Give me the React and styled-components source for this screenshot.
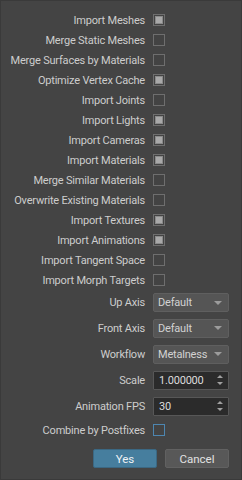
import React from "react"
import styled, { createGlobalStyle } from "styled-components"

const GlobalStyle = createGlobalStyle`
  html, body {
    margin: 0;
    padding: 0;
    background: #444444;
  }
`

const color_bg = "#444444"
const color_text = "#cdcdcd"

const Dialog = styled.div`
  box-sizing: border-box;
  width: 242px;
  height: 480px;
  background: ${color_bg};
  border: 1px solid #3a3a3a;
  padding: 9px 12px 0 0;
  font-family: Roboto, "Liberation Sans", Arial, sans-serif;
  font-size: 11px;
  letter-spacing: -0.2px;
  color: ${color_text};
`

const Form = styled.div`
  display: grid;
  grid-template-columns: minmax(0, 1fr) 76px;
  column-gap: 8px;
`

const Label = styled.div`
  height: ${(p) => p.$h || 20}px;
  display: flex;
  align-items: center;
  justify-content: flex-end;
  white-space: nowrap;
`

const Cell = styled.div`
  height: ${(p) => p.$h || 20}px;
  display: flex;
  align-items: center;
`

const Box = styled.div`
  box-sizing: border-box;
  width: 12px;
  height: 12px;
  border: 1px solid ${(p) => (p.$focus ? "#4d86b0" : "#6e6e6e")};
  background: #434343;
  display: flex;
  align-items: center;
  justify-content: center;
`

const Tick = styled.div`
  box-sizing: border-box;
  width: 8px;
  height: 8px;
  background: #a9a9a9;
  border: 1px solid #8a8a8a;
`

const Combo = styled.div`
  box-sizing: border-box;
  width: 76px;
  height: 19px;
  background: #555555;
  border: 1px solid #5f5f5f;
  border-radius: 2px;
  display: flex;
  align-items: center;
  justify-content: space-between;
  padding: 0 6px 0 4px;
  color: #d2d2d2;
`

const Arrow = styled.div`
  width: 0;
  height: 0;
  border-left: 4px solid transparent;
  border-right: 4px solid transparent;
  border-top: 4px solid #9c9c9c;
`

const Spin = styled.div`
  box-sizing: border-box;
  width: 76px;
  height: 19px;
  background: #2b2b2b;
  border: 1px solid #575757;
  border-radius: 1px;
  display: flex;
  align-items: center;
  justify-content: space-between;
  padding: 0 5px 0 5px;
  color: #dcdcdc;
`

const SpinArrows = styled.div`
  display: flex;
  flex-direction: column;
  gap: 4px;
`

const SpinTri = styled.div`
  width: 0;
  height: 0;
  border-left: 3px solid transparent;
  border-right: 3px solid transparent;
  ${(p) =>
    p.$up
      ? "border-bottom: 3px solid #a0a0a0;"
      : "border-top: 3px solid #a0a0a0;"}
`

const Buttons = styled.div`
  display: flex;
  justify-content: flex-end;
  gap: 8px;
  margin-top: 8px;
`

const Button = styled.div`
  box-sizing: border-box;
  width: 64px;
  height: 19px;
  border-radius: 2px;
  display: flex;
  align-items: center;
  justify-content: center;
  font-size: 11.5px;
  letter-spacing: 0;
  background: ${(p) => (p.$primary ? "#467e9e" : "#585858")};
  border: 1px solid ${(p) => (p.$primary ? "#3b6883" : "#616161")};
  color: ${(p) => (p.$primary ? "#eef2f5" : "#e2e2e2")};
`

const checks = [
  ["Import Meshes", true],
  ["Merge Static Meshes", false],
  ["Merge Surfaces by Materials", false],
  ["Optimize Vertex Cache", true],
  ["Import Joints", false],
  ["Import Lights", true],
  ["Import Cameras", true],
  ["Import Materials", true],
  ["Merge Similar Materials", false],
  ["Overwrite Existing Materials", false],
  ["Import Textures", true],
  ["Import Animations", true],
  ["Import Tangent Space", false],
  ["Import Morph Targets", false],
]

const App = () => {
  return (
    <>
      <GlobalStyle />
      <Dialog>
        <Form>
          {checks.map(([label, on]) => (
            <React.Fragment key={label}>
              <Label>{label}</Label>
              <Cell>
                <Box>{on && <Tick />}</Box>
              </Cell>
            </React.Fragment>
          ))}

          <Label $h={25}>Up Axis</Label>
          <Cell $h={25}>
            <Combo>
              Default
              <Arrow />
            </Combo>
          </Cell>
          <Label $h={26}>Front Axis</Label>
          <Cell $h={26}>
            <Combo>
              Default
              <Arrow />
            </Combo>
          </Cell>
          <Label $h={26}>Workflow</Label>
          <Cell $h={26}>
            <Combo>
              Metalness
              <Arrow />
            </Combo>
          </Cell>
          <Label $h={26}>Scale</Label>
          <Cell $h={26}>
            <Spin>
              1.000000
              <SpinArrows>
                <SpinTri $up />
                <SpinTri />
              </SpinArrows>
            </Spin>
          </Cell>
          <Label $h={26}>Animation FPS</Label>
          <Cell $h={26}>
            <Spin>
              30
              <SpinArrows>
                <SpinTri $up />
                <SpinTri />
              </SpinArrows>
            </Spin>
          </Cell>
          <Label $h={22}>Combine by Postfixes</Label>
          <Cell $h={22}>
            <Box $focus />
          </Cell>
        </Form>
        <Buttons>
          <Button $primary>Yes</Button>
          <Button>Cancel</Button>
        </Buttons>
      </Dialog>
    </>
  )
}

export default App
